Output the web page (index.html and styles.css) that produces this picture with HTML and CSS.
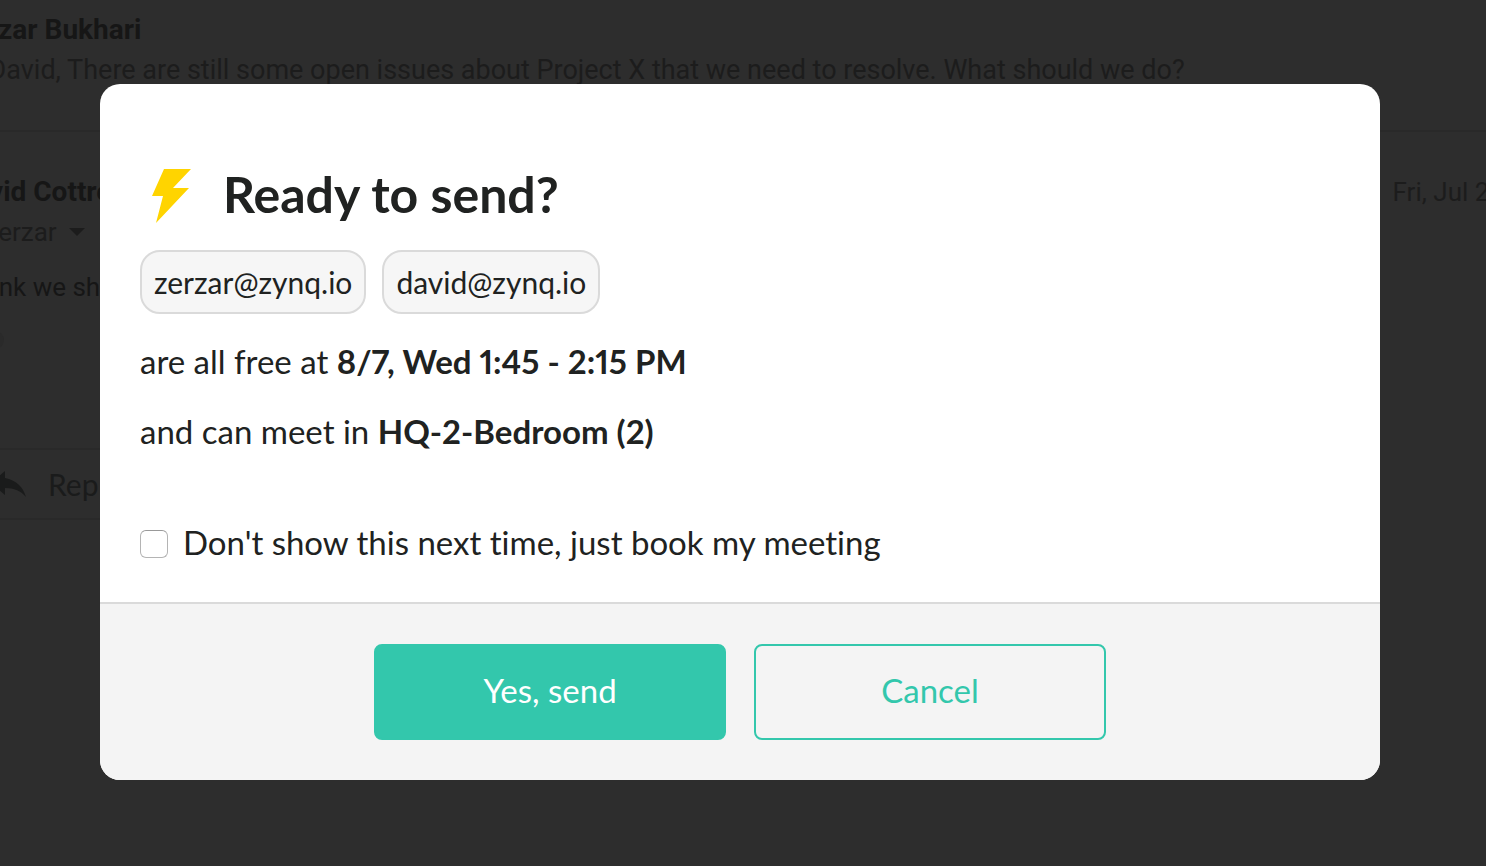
FILE: index.html
```html
<!DOCTYPE html>
<html lang="en">
<head>
    <meta charset="UTF-8">
    <meta name="viewport" content="width=device-width, initial-scale=1.0">
    <title>Ready to send?</title>
    <link rel="stylesheet" href="styles.css">
</head>
<body>
    <div class="thread">
        <div class="message collapsed">
            <div class="sender">Zerzar Bukhari</div>
            <div class="snippet">Hi David, There are still some open issues about Project X that we need to resolve. What should we do?</div>
        </div>
        <div class="message">
            <div class="message-header">
                <div class="sender">David Cottrell</div>
                <div class="date">Fri, Jul 26</div>
            </div>
            <div class="recipient">to zerzar <span class="caret"></span></div>
            <div class="message-body">I think we should</div>
            <div class="trimmed"></div>
        </div>
        <div class="reply-bar">
            <svg class="reply-icon" viewBox="0 0 38 30" aria-hidden="true">
                <path d="M17 2v7c11 2 18 9 21 19-5-6-12-9-21-9v7L3 14z"/>
            </svg>
            <span>Reply</span>
        </div>
    </div>

    <div class="overlay">
        <div class="modal" role="dialog" aria-labelledby="modalTitle">
            <div class="modal-content">
                <div class="modal-title">
                    <svg class="bolt" viewBox="0 0 40 58" aria-hidden="true">
                        <path d="M13 4h27L22 23h16L5 58l7-27H1z"/>
                    </svg>
                    <h1 id="modalTitle">Ready to send?</h1>
                </div>
                <div class="guests">
                    <span class="guest">zerzar@zynq.io</span>
                    <span class="guest">david@zynq.io</span>
                </div>
                <p>are all free at <b>8/7, Wed 1:45 - 2:15 PM</b></p>
                <p>and can meet in <b>HQ-2-Bedroom (2)</b></p>
                <div class="skip">
                    <input type="checkbox" id="skip">
                    <label for="skip">Don't show this next time, just book my meeting</label>
                </div>
            </div>
            <div class="modal-footer">
                <button type="button" class="btn btn-primary">Yes, send</button>
                <button type="button" class="btn btn-outline">Cancel</button>
            </div>
        </div>
    </div>
</body>
</html>
```
FILE: styles.css
```css
* {
    box-sizing: border-box;
}

body {
    margin: 0;
    min-height: 100vh;
    overflow: hidden;
    background-color: #2d2d2d;
    color: #161616;
    font-family: Roboto, Arial, sans-serif;
    font-size: 26px;
    line-height: 40px;
}

/* mail thread behind the modal */
.thread {
    margin-left: -44px;
    margin-right: -18px;
    white-space: nowrap;
}

.message {
    height: 316px;
    padding-top: 40px;
}

.message.collapsed {
    height: 132px;
    padding-top: 10px;
    border-bottom: 2px solid #292929;
}

.message-header {
    display: flex;
    justify-content: space-between;
}

.sender {
    font-size: 28px;
    font-weight: bold;
}

.snippet,
.date,
.recipient {
    color: #1c1c1c;
}

.snippet {
    font-size: 27px;
}

.recipient {
    display: flex;
    align-items: center;
    gap: 12px;
}

.caret {
    border: 8px solid transparent;
    border-top-color: #1c1c1c;
    border-bottom: 0;
}

.message-body {
    margin-top: 15px;
}

.trimmed {
    width: 48px;
    height: 18px;
    margin-top: 24px;
    border-radius: 9px;
    background-color: #2a2a2a;
}

.reply-bar {
    display: flex;
    align-items: center;
    gap: 22px;
    width: 50%;
    height: 72px;
    padding-left: 32px;
    border-top: 2px solid #292929;
    border-bottom: 2px solid #292929;
    color: #1a1b1b;
    font-family: Lato, Roboto, sans-serif;
    font-size: 30px;
}

.reply-icon {
    width: 38px;
    height: 30px;
    fill: #1a1b1b;
}

.overlay {
    position: fixed;
    inset: 0;
    padding: 84px 106px 84px 100px;
}

.modal {
    overflow: hidden;
    border-radius: 20px;
    background-color: #fff;
    color: #202221;
    font-family: Lato, Roboto, sans-serif;
    font-size: 33px;
    font-variant-ligatures: none;
    font-variant-numeric: proportional-nums;
}

.modal-content {
    padding: 80px 40px 40px;
}

.modal-title {
    display: flex;
    align-items: center;
    gap: 32px;
    padding-left: 11px;
    margin-bottom: 26px;
}

.modal-title h1 {
    margin: 0;
    font-size: 50px;
    line-height: 60px;
}

.bolt {
    width: 40px;
    height: 58px;
    fill: #ffd400;
}

.guests {
    display: flex;
    gap: 16px;
}

.guest {
    padding: 10px 12px;
    border: 2px solid #dadada;
    border-radius: 20px;
    background-color: #f6f6f6;
    font-size: 30px;
}

.modal p {
    margin: 27px 0 30px;
}

.skip {
    display: flex;
    align-items: center;
    gap: 15px;
    margin-top: 71px;
}

.skip input {
    appearance: none;
    width: 28px;
    height: 28px;
    margin: 4px 0 0;
    border: 1px solid #b4b4b4;
    border-top-color: #999;
    border-radius: 6px;
    background-color: #fff;
}

.modal-footer {
    display: flex;
    justify-content: center;
    gap: 28px;
    padding: 40px;
    border-top: 2px solid #dadada;
    background-color: #f4f4f4;
}

.btn {
    width: 352px;
    height: 96px;
    padding: 0 0 4px;
    border: 2px solid #33c7ac;
    border-radius: 8px;
    font-family: inherit;
    font-size: 33px;
    cursor: pointer;
}

.btn-primary {
    background-color: #33c7ac;
    color: #fff;
}

.btn-outline {
    background-color: transparent;
    color: #33c7ac;
}
```
